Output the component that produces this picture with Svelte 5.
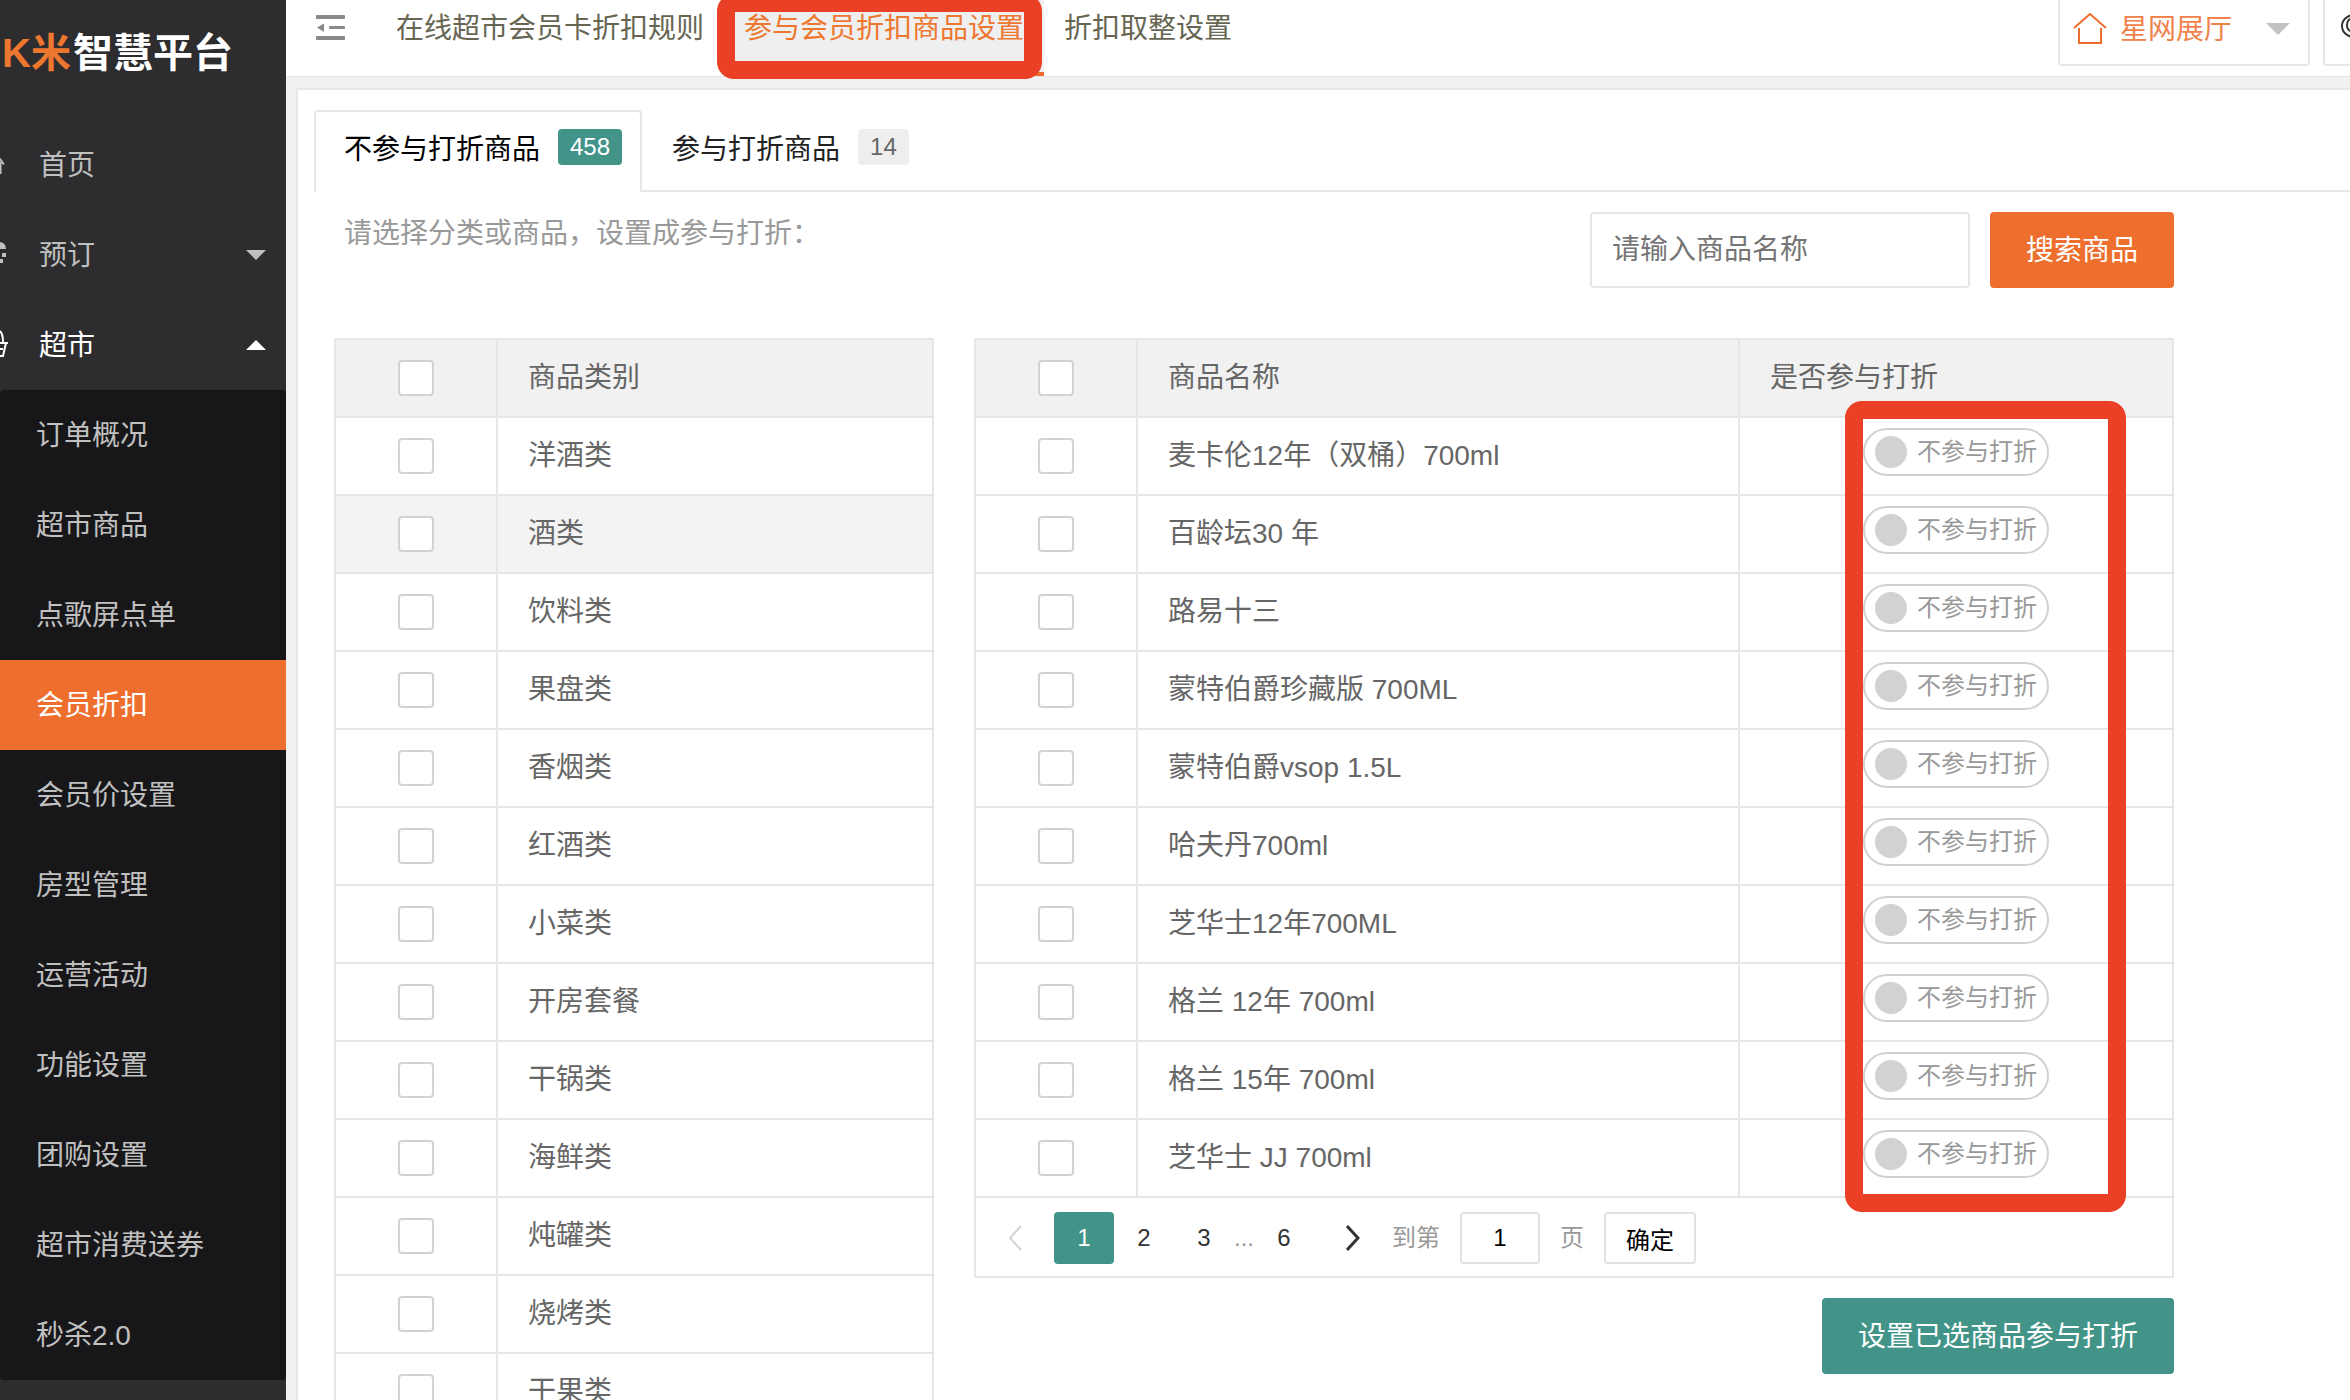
<script lang="ts">
  interface MenuItem {
    label: string;
    icon: 'home' | 'booking' | 'shop';
    arrow?: 'up' | 'down';
    open?: boolean;
  }

  const menu: MenuItem[] = [
    { label: '首页', icon: 'home' },
    { label: '预订', icon: 'booking', arrow: 'down' },
    { label: '超市', icon: 'shop', arrow: 'up', open: true },
  ];

  const submenu = [
    '订单概况', '超市商品', '点歌屏点单', '会员折扣', '会员价设置', '房型管理',
    '运营活动', '功能设置', '团购设置', '超市消费送券', '秒杀2.0',
  ];
  const currentSub = '会员折扣';

  const categories = [
    '洋酒类', '酒类', '饮料类', '果盘类', '香烟类', '红酒类', '小菜类',
    '开房套餐', '干锅类', '海鲜类', '炖罐类', '烧烤类', '干果类',
  ];
  const hovered = '酒类';

  const products = [
    '麦卡伦12年（双桶）700ml',
    '百龄坛30 年',
    '路易十三',
    '蒙特伯爵珍藏版 700ML',
    '蒙特伯爵vsop 1.5L',
    '哈夫丹700ml',
    '芝华士12年700ML',
    '格兰 12年 700ml',
    '格兰 15年 700ml',
    '芝华士 JJ 700ml',
  ];

  let page = $state(1);
  let jumpTo = $state('1');
  let keyword = $state('');
  let discounted: boolean[] = $state(products.map(() => false));
</script>

<div class="app">
  <aside class="sidebar">
    <div class="logo"><span class="logo-k">K米</span><span>智慧平台</span></div>

    <nav>
      {#each menu as item (item.label)}
        <a class="menu-item" class:open={item.open} href="#{item.icon}">
          <svg class="menu-icon" width="8" height="32" viewBox="0 0 8 32" fill="none" aria-hidden="true">
            {#if item.icon === 'home'}
              <path d="M-6 2L4 15.500M0.500 13V25" stroke="currentColor" stroke-width="2"/>
            {:else if item.icon === 'booking'}
              <path d="M0 3Q6 4 6 10H0zM2 14h4v4H2zM0 20h3v4H0z" fill="currentColor"/>
            {:else}
              <path d="M0 2Q3 5 3 13M0 14H8M6 14L3 27H0M0 20H3" stroke="currentColor" stroke-width="2"/>
            {/if}
          </svg>
          <span class="menu-label">{item.label}</span>
          {#if item.arrow}
            <span class="caret {item.arrow}"></span>
          {/if}
        </a>
      {/each}

      <div class="submenu">
        {#each submenu as label (label)}
          <a class="sub-item" class:current={label === currentSub} href="#sub">{label}</a>
        {/each}
      </div>
    </nav>
  </aside>

  <div class="main">
    <header class="topbar">
      <button class="fold" aria-label="收起菜单">
        <svg width="30" height="26" viewBox="0 0 30 26" fill="#888" aria-hidden="true">
          <rect x="0" y="0" width="29" height="4" rx="1"/>
          <rect x="13" y="11" width="16" height="3" rx="1"/>
          <rect x="0" y="21" width="29" height="4" rx="1"/>
          <path d="M1 12.500L8 8.500V17z"/>
        </svg>
      </button>
      <nav class="top-tabs">
        <a class="top-tab" href="#rules">在线超市会员卡折扣规则</a>
        <a class="top-tab active" href="#goods">参与会员折扣商品设置<span class="mark mark-tab"></span></a>
        <a class="top-tab" href="#rounding">折扣取整设置</a>
      </nav>
      <div class="shop-box">
        <svg width="34" height="32" viewBox="0 0 34 32" fill="none" stroke="#ee6f2d" stroke-width="2" aria-hidden="true">
          <path d="M1 15L17 1L33 15M6 15V30H28V15"/>
        </svg>
        <select class="shop-select" aria-label="门店">
          <option>星网展厅</option>
        </select>
        <span class="shop-caret"></span>
      </div>
      <button class="user-box" aria-label="账号">
        <svg width="26" height="26" viewBox="0 0 26 26" fill="none" stroke="#333" stroke-width="2" aria-hidden="true">
          <ellipse cx="13" cy="13" rx="12" ry="11"/>
          <ellipse cx="10" cy="12" rx="4" ry="6"/>
        </svg>
      </button>
    </header>

    <section class="panel">
      <div class="tabs" role="tablist">
        <button class="tab selected" role="tab" aria-selected="true">不参与打折商品<span class="badge green">458</span></button>
        <button class="tab" role="tab" aria-selected="false">参与打折商品<span class="badge">14</span></button>
      </div>

      <div class="content">
        <div class="tools">
          <p class="hint">请选择分类或商品，设置成参与打折：</p>
          <form class="search" onsubmit={(e) => e.preventDefault()}>
            <input class="search-input" type="text" placeholder="请输入商品名称" aria-label="商品名称" bind:value={keyword} />
            <button class="btn orange">搜索商品</button>
          </form>
        </div>

        <div class="tables">
          <table class="grid">
            <thead>
              <tr>
                <th class="check"><input type="checkbox" aria-label="全选类别" /></th>
                <th>商品类别</th>
              </tr>
            </thead>
            <tbody>
              {#each categories as name (name)}
                <tr class:hovered={name === hovered}>
                  <td class="check"><input type="checkbox" aria-label={name} /></td>
                  <td>{name}</td>
                </tr>
              {/each}
            </tbody>
          </table>

          <div class="goods">
            <div class="goods-table">
              <table class="grid">
                <thead>
                  <tr>
                    <th class="check"><input type="checkbox" aria-label="全选商品" /></th>
                    <th>商品名称</th>
                    <th class="state">是否参与打折</th>
                  </tr>
                </thead>
                <tbody>
                  {#each products as name, i (name)}
                    <tr>
                      <td class="check"><input type="checkbox" aria-label={name} /></td>
                      <td>{name}</td>
                      <td class="state">
                        <label class="switch">
                          <input type="checkbox" role="switch" bind:checked={discounted[i]} />
                          <span>不参与打折</span>
                        </label>
                      </td>
                    </tr>
                  {/each}
                </tbody>
              </table>
              <span class="mark mark-column"></span>
            </div>

            <div class="pager">
              <button class="page arrow prev" aria-label="上一页" disabled>
                <svg width="14" height="26" viewBox="0 0 14 26" fill="none" stroke="currentColor" stroke-width="2" aria-hidden="true"><path d="M13 1L2 13L13 25"/></svg>
              </button>
              {#each [1, 2, 3] as n (n)}
                <button class="page" class:on={page === n} onclick={() => (page = n)}>{n}</button>
              {/each}
              <span class="dots">...</span>
              <button class="page" onclick={() => (page = 6)}>6</button>
              <button class="page arrow" aria-label="下一页">
                <svg width="14" height="26" viewBox="0 0 14 26" fill="none" stroke="currentColor" stroke-width="3" aria-hidden="true"><path d="M1 1L12 13L1 25"/></svg>
              </button>
              <label class="jump">到第<input type="text" bind:value={jumpTo} />页</label>
              <button class="confirm">确定</button>
            </div>

            <button class="btn green submit">设置已选商品参与打折</button>
          </div>
        </div>
      </div>
    </section>
  </div>
</div>

<style>
  :global(body) {
    font-family: "Liberation Sans", "Noto Sans CJK SC", sans-serif;
    font-size: 28px;
    color: #666;
    background: #f1f1f1;
  }
  button, input, select {
    font: inherit;
    color: inherit;
    margin: 0;
    box-sizing: border-box;
  }
  button {
    border: 0;
    background: none;
    padding: 0;
    cursor: pointer;
  }
  a { color: inherit; text-decoration: none; }

  .app {
    display: flex;
    height: 100vh;
    overflow: hidden;
  }

  /* Sidebar */
  .sidebar {
    flex: 0 0 286px;
    background: #2d2d2f;
    color: #c0c0c0;
  }
  .logo {
    display: flex;
    gap: 2px;
    height: 120px;
    padding-left: 2px;
    line-height: 106px;
    font-size: 40px;
    font-weight: 700;
    color: #fff;
  }
  .logo-k { color: #ee7730; }
  .menu-item {
    display: flex;
    align-items: center;
    height: 90px;
  }
  .menu-item.open { color: #fff; }
  .menu-icon { margin-right: 31px; }
  .menu-label {
    flex: 1;
    padding-top: 2px;
    line-height: 88px;
  }
  .caret {
    margin-right: 20px;
    border: 10px solid transparent;
  }
  .caret.down { border-top-color: currentColor; border-bottom-width: 0; }
  .caret.up { border-bottom-color: currentColor; border-top-width: 0; }
  .submenu {
    background: #171719;
    border-radius: 4px;
  }
  .sub-item {
    display: block;
    padding: 2px 0 0 36px;
    line-height: 88px;
  }
  .sub-item.current { background: #ee6f2d; color: #fff; }

  /* Top bar */
  .main {
    flex: 1;
    min-width: 0;
    display: flex;
    flex-direction: column;
  }
  .topbar {
    display: flex;
    flex-shrink: 0;
    height: 77px;
    background: #fff;
    border-bottom: 1px solid #e2e2e2;
    box-sizing: border-box;
  }
  .fold {
    align-self: flex-start;
    margin: 15px 30px 0;
    line-height: 0;
  }
  .top-tabs { display: flex; flex: 1; }
  .top-tab {
    position: relative;
    padding: 0 20px;
    line-height: 58px;
    white-space: nowrap;
    color: #666652;
  }
  .top-tab.active {
    color: #ee7730;
    background: #efefef;
    border-bottom: 4px solid #ee6f2d;
  }
  .shop-box, .user-box {
    display: flex;
    align-items: center;
    height: 66px;
    box-sizing: border-box;
    border: 2px solid #e6e6e6;
    border-top: 0;
    border-radius: 0 0 4px 4px;
  }
  .shop-box {
    width: 252px;
    margin-right: 13px;
    padding: 0 18px 6px 13px;
  }
  .shop-select {
    flex: 1;
    min-width: 0;
    margin-left: 13px;
    appearance: none;
    border: 0;
    padding: 0;
    background: none;
    color: #f0824c;
  }
  .shop-caret {
    border: 12px solid transparent;
    border-top-color: #c2c2c2;
    border-bottom-width: 0;
  }
  .user-box {
    width: 27px;
    border-right: 0;
    border-bottom-right-radius: 0;
    padding: 0 0 12px 16px;
    overflow: hidden;
  }
  .user-box svg { flex-shrink: 0; }

  /* Panel */
  .panel {
    flex: 1;
    min-height: 0;
    margin: 11px 0 0 10px;
    padding-top: 20px;
    background: #fff;
    border: solid #e6e6e6;
    border-width: 2px 0 0 2px;
  }
  .tabs {
    display: flex;
    margin-left: 16px;
    height: 82px;
    box-shadow: inset 0 -2px #e6e6e6;
  }
  .tab {
    display: flex;
    align-items: center;
    padding: 0 18px 8px 30px;
    color: #222;
  }
  .tab.selected {
    padding: 0 18px 10px 28px;
    color: #000;
    background: #fff;
    border: 2px solid #e6e6e6;
    border-bottom: 0;
    border-radius: 4px 4px 0 0;
  }
  .badge {
    margin-left: 18px;
    padding: 0 12px;
    line-height: 36px;
    font-size: 24px;
    border-radius: 4px;
    background: #eee;
    color: #666;
  }
  .badge.green { background: #429488; color: #fff; }

  .content { padding: 20px 176px 0 36px; }
  .tools {
    display: flex;
    justify-content: space-between;
  }
  .hint {
    margin: 0 10px;
    line-height: 44px;
    color: #999;
  }
  .search { display: flex; gap: 20px; }
  .search-input {
    width: 380px;
    height: 76px;
    padding: 0 20px;
    border: 2px solid #e6e6e6;
    border-radius: 4px;
  }
  .search-input::placeholder { color: #757575; }
  .btn {
    height: 76px;
    padding: 0 36px 4px;
    border-radius: 4px;
    color: #fff;
  }
  .btn.orange { background: #ee6f2d; }
  .btn.green { background: #429488; }

  /* Tables */
  .tables {
    display: grid;
    grid-template-columns: 1fr 2fr;
    align-items: start;
    gap: 40px;
    margin-top: 50px;
  }
  .grid {
    width: 100%;
    table-layout: fixed;
    border-collapse: separate;
    border-spacing: 0;
    border: solid #e6e6e6;
    border-width: 2px 0 0 2px;
  }
  .grid th, .grid td {
    height: 76px;
    padding: 0 30px;
    border: solid #e6e6e6;
    border-width: 0 2px 2px 0;
    line-height: 40px;
    font-weight: 400;
    text-align: left;
  }
  .grid th { background: #f1f1f1; }
  .grid .hovered td { background: #f3f3f3; }
  .grid .check {
    width: 160px;
    padding: 0;
    text-align: center;
    line-height: 0;
  }
  .grid .check input {
    appearance: none;
    width: 36px;
    height: 36px;
    border: 2px solid #d2d2d2;
    border-radius: 4px;
    background: #fff;
    vertical-align: middle;
  }
  .grid th.state { width: 372px; }
  .grid td.state {
    padding: 0 0 8px;
    height: 68px;
    text-align: center;
  }
  .switch {
    display: inline-flex;
    align-items: center;
    gap: 10px;
    height: 44px;
    padding: 0 10px;
    border: 2px solid #d2d2d2;
    border-radius: 24px;
    font-size: 24px;
    color: #999;
    vertical-align: middle;
  }
  .switch input {
    appearance: none;
    width: 32px;
    height: 32px;
    border-radius: 50%;
    background: #d2d2d2;
  }
  .goods-table { position: relative; }

  /* Red marker frames */
  .mark {
    position: absolute;
    border: 18px solid #ea4026;
    border-radius: 17px;
    box-sizing: border-box;
    pointer-events: none;
  }
  .mark-tab { top: -6px; bottom: -7px; left: -7px; right: 2px; }
  .mark-column { top: 63px; bottom: -14px; right: 48px; width: 281px; }

  /* Pagination */
  .pager {
    display: flex;
    align-items: center;
    height: 76px;
    padding-top: 2px;
    border: solid #e6e6e6;
    border-width: 0 2px 2px;
    font-size: 24px;
    color: #333;
  }
  .page {
    width: 60px;
    height: 52px;
    border-radius: 4px;
  }
  .page.on { background: #429488; color: #fff; }
  .page.arrow { width: 78px; line-height: 0; }
  .page.prev { color: #d2d2d2; }
  .dots { color: #999; }
  .jump { color: #999; }
  .jump input {
    width: 80px;
    height: 52px;
    margin: 0 20px;
    padding: 0;
    border: 2px solid #e2e2e2;
    border-radius: 4px;
    text-align: center;
    color: #000;
  }
  .confirm {
    height: 52px;
    margin-left: 20px;
    padding: 0 20px;
    border: 2px solid #e2e2e2;
    border-radius: 4px;
    color: #000;
  }
  .submit {
    display: block;
    margin: 20px 0 0 auto;
  }
</style>
